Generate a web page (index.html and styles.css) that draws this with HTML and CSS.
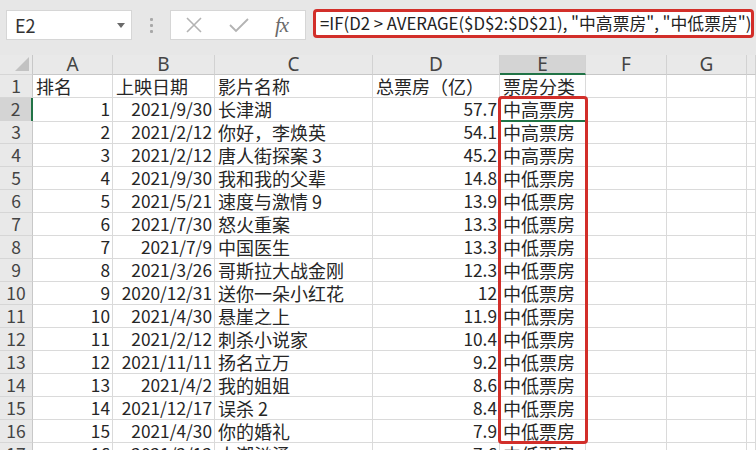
FILE: index.html
```html
<!DOCTYPE html>
<html lang="zh">
<head>
<meta charset="utf-8">
<link rel="stylesheet" href="styles.css">
</head>
<body>
<div class="toolbar">
  <div class="namebox"><span>E2</span><span class="caret"></span></div>
  <div class="grip"><i></i><i></i><i></i></div>
  <div class="fxbox">
    <svg class="ico" width="18" height="18" viewBox="0 0 18 18"><path d="M2 2 L16 16 M16 2 L2 16" stroke="#b3b3b3" stroke-width="1.6" fill="none"/></svg>
    <svg class="ico" width="22" height="18" viewBox="0 0 22 18"><path d="M2 9 L8 15 L20 3" stroke="#b3b3b3" stroke-width="1.8" fill="none"/></svg>
    <span class="fx">fx</span>
  </div>
  <div class="formula">=IF(D2 &gt; AVERAGE($D$2:$D$21), "中高票房", "中低票房")</div>
</div>
<div class="sheet">
  <div class="row head">
    <div class="rh corner"><span class="tri"></span></div>
    <div class="ch">A</div><div class="ch">B</div><div class="ch">C</div><div class="ch">D</div><div class="ch sel">E</div><div class="ch">F</div><div class="ch">G</div><div class="ch"></div>
  </div>
  <div class="row"><div class="rh">1</div><div class="c">排名</div><div class="c">上映日期</div><div class="c">影片名称</div><div class="c">总票房（亿）</div><div class="c">票房分类</div><div class="c"></div><div class="c"></div><div class="c"></div></div>
  <div class="row"><div class="rh act">2</div><div class="c n">1</div><div class="c n">2021/9/30</div><div class="c">长津湖</div><div class="c n">57.7</div><div class="c active">中高票房</div><div class="c"></div><div class="c"></div><div class="c"></div></div>
  <div class="row"><div class="rh">3</div><div class="c n">2</div><div class="c n">2021/2/12</div><div class="c">你好，李焕英</div><div class="c n">54.1</div><div class="c">中高票房</div><div class="c"></div><div class="c"></div><div class="c"></div></div>
  <div class="row"><div class="rh">4</div><div class="c n">3</div><div class="c n">2021/2/12</div><div class="c">唐人街探案 3</div><div class="c n">45.2</div><div class="c">中高票房</div><div class="c"></div><div class="c"></div><div class="c"></div></div>
  <div class="row"><div class="rh">5</div><div class="c n">4</div><div class="c n">2021/9/30</div><div class="c">我和我的父辈</div><div class="c n">14.8</div><div class="c">中低票房</div><div class="c"></div><div class="c"></div><div class="c"></div></div>
  <div class="row"><div class="rh">6</div><div class="c n">5</div><div class="c n">2021/5/21</div><div class="c">速度与激情 9</div><div class="c n">13.9</div><div class="c">中低票房</div><div class="c"></div><div class="c"></div><div class="c"></div></div>
  <div class="row"><div class="rh">7</div><div class="c n">6</div><div class="c n">2021/7/30</div><div class="c">怒火重案</div><div class="c n">13.3</div><div class="c">中低票房</div><div class="c"></div><div class="c"></div><div class="c"></div></div>
  <div class="row"><div class="rh">8</div><div class="c n">7</div><div class="c n">2021/7/9</div><div class="c">中国医生</div><div class="c n">13.3</div><div class="c">中低票房</div><div class="c"></div><div class="c"></div><div class="c"></div></div>
  <div class="row"><div class="rh">9</div><div class="c n">8</div><div class="c n">2021/3/26</div><div class="c">哥斯拉大战金刚</div><div class="c n">12.3</div><div class="c">中低票房</div><div class="c"></div><div class="c"></div><div class="c"></div></div>
  <div class="row"><div class="rh">10</div><div class="c n">9</div><div class="c n">2020/12/31</div><div class="c">送你一朵小红花</div><div class="c n">12</div><div class="c">中低票房</div><div class="c"></div><div class="c"></div><div class="c"></div></div>
  <div class="row"><div class="rh">11</div><div class="c n">10</div><div class="c n">2021/4/30</div><div class="c">悬崖之上</div><div class="c n">11.9</div><div class="c">中低票房</div><div class="c"></div><div class="c"></div><div class="c"></div></div>
  <div class="row"><div class="rh">12</div><div class="c n">11</div><div class="c n">2021/2/12</div><div class="c">刺杀小说家</div><div class="c n">10.4</div><div class="c">中低票房</div><div class="c"></div><div class="c"></div><div class="c"></div></div>
  <div class="row"><div class="rh">13</div><div class="c n">12</div><div class="c n">2021/11/11</div><div class="c">扬名立万</div><div class="c n">9.2</div><div class="c">中低票房</div><div class="c"></div><div class="c"></div><div class="c"></div></div>
  <div class="row"><div class="rh">14</div><div class="c n">13</div><div class="c n">2021/4/2</div><div class="c">我的姐姐</div><div class="c n">8.6</div><div class="c">中低票房</div><div class="c"></div><div class="c"></div><div class="c"></div></div>
  <div class="row"><div class="rh">15</div><div class="c n">14</div><div class="c n">2021/12/17</div><div class="c">误杀 2</div><div class="c n">8.4</div><div class="c">中低票房</div><div class="c"></div><div class="c"></div><div class="c"></div></div>
  <div class="row"><div class="rh">16</div><div class="c n">15</div><div class="c n">2021/4/30</div><div class="c">你的婚礼</div><div class="c n">7.9</div><div class="c">中低票房</div><div class="c"></div><div class="c"></div><div class="c"></div></div>
  <div class="row"><div class="rh">17</div><div class="c n">16</div><div class="c n">2021/2/12</div><div class="c">人潮汹涌</div><div class="c n">7.6</div><div class="c">中低票房</div><div class="c"></div><div class="c"></div><div class="c"></div></div>
  <div class="redbox"></div>
</div>
</body>
</html>
```
FILE: styles.css
```css
* { box-sizing: border-box; }
html, body { margin: 0; padding: 0; }
body {
  width: 756px;
  height: 450px;
  overflow: hidden;
  background: #fff;
  font-family: "Noto Sans CJK SC", "Noto Sans", sans-serif;
  color: #262626;
}
.toolbar {
  height: 55px;
  background: #e7e7e7;
  display: flex;
  align-items: flex-start;
  padding-top: 10px;
}
.namebox {
  margin-left: 6px;
  width: 126px;
  height: 30px;
  background: #fff;
  border: 1px solid #d6d6d6;
  display: flex;
  align-items: center;
  justify-content: space-between;
  padding: 0 6px 0 8px;
  font-size: 18px;
  color: #333;
}
.caret {
  width: 0; height: 0;
  border-left: 4px solid transparent;
  border-right: 4px solid transparent;
  border-top: 5px solid #6a6a6a;
}
.grip {
  width: 38px;
  height: 30px;
  display: flex;
  flex-direction: column;
  align-items: center;
  justify-content: center;
  gap: 3px;
}
.grip i { display: block; width: 3px; height: 3px; background: #a8a8a8; border-radius: 1px; }
.fxbox {
  width: 136px;
  height: 30px;
  background: #fff;
  border: 1px solid #d6d6d6;
  display: flex;
  align-items: center;
  padding-left: 14px;
}
.fxbox .ico:first-child { margin-right: 25px; }
.fxbox .ico:nth-child(2) { margin-right: 25px; }
.fx {
  font-family: "Liberation Serif", "DejaVu Serif", serif;
  font-style: italic;
  font-size: 21px;
  line-height: 24px;
  color: #6a6a6a;
  letter-spacing: -1px;
}
.formula {
  margin-left: 7px;
  width: 441px;
  height: 29px;
  margin-top: -1px;
  background: #fff;
  border: 3.5px solid #d22f2a;
  border-radius: 4px;
  font-size: 16.8px;
  line-height: 22px;
  padding-left: 4px;
  white-space: nowrap;
  overflow: hidden;
  color: #222;
}
.sheet { position: relative; }
.row {
  display: grid;
  grid-template-columns: 33px 80px 102px 158px 127px 86px 81px 80px 1fr;
  height: 23px;
}
.row.head { height: 20px; }
.ch {
  background: #e9e9e9;
  border-right: 1px solid #d2d2d2;
  border-bottom: 1px solid #c8c8c8;
  text-align: center;
  font-family: "Noto Sans", sans-serif;
  font-size: 19px;
  line-height: 19px;
  color: #444;
  overflow: hidden;
}
.ch.sel {
  background: #d4d4d4;
  border-bottom: 2px solid #217346;
}
.rh {
  background: #e9e9e9;
  border-right: 1px solid #c8c8c8;
  border-bottom: 1px solid #d6d6d6;
  text-align: center;
  font-size: 17.5px;
  line-height: 22px;
  color: #444;
}
.rh.act {
  background: #d4d4d4;
  border-right: 2px solid #217346;
}
.corner { position: relative; }
.tri {
  position: absolute;
  right: 3px;
  bottom: 3px;
  width: 0; height: 0;
  border-left: 14px solid transparent;
  border-bottom: 14px solid #c2c2c2;
}
.c {
  border-right: 1px solid #dadada;
  border-bottom: 1px solid #dadada;
  font-size: 18px;
  line-height: 22px;
  padding: 0 2px 0 3px;
  white-space: nowrap;
  overflow: visible;
}
.c.n { text-align: right; font-size: 17.3px; }
.c.active { border-bottom: 2px solid #217346; }
.redbox {
  position: absolute;
  left: 498px;
  top: 41px;
  width: 90px;
  height: 348px;
  border: 3.5px solid #d22f2a;
  border-radius: 4px;
  pointer-events: none;
}
```
